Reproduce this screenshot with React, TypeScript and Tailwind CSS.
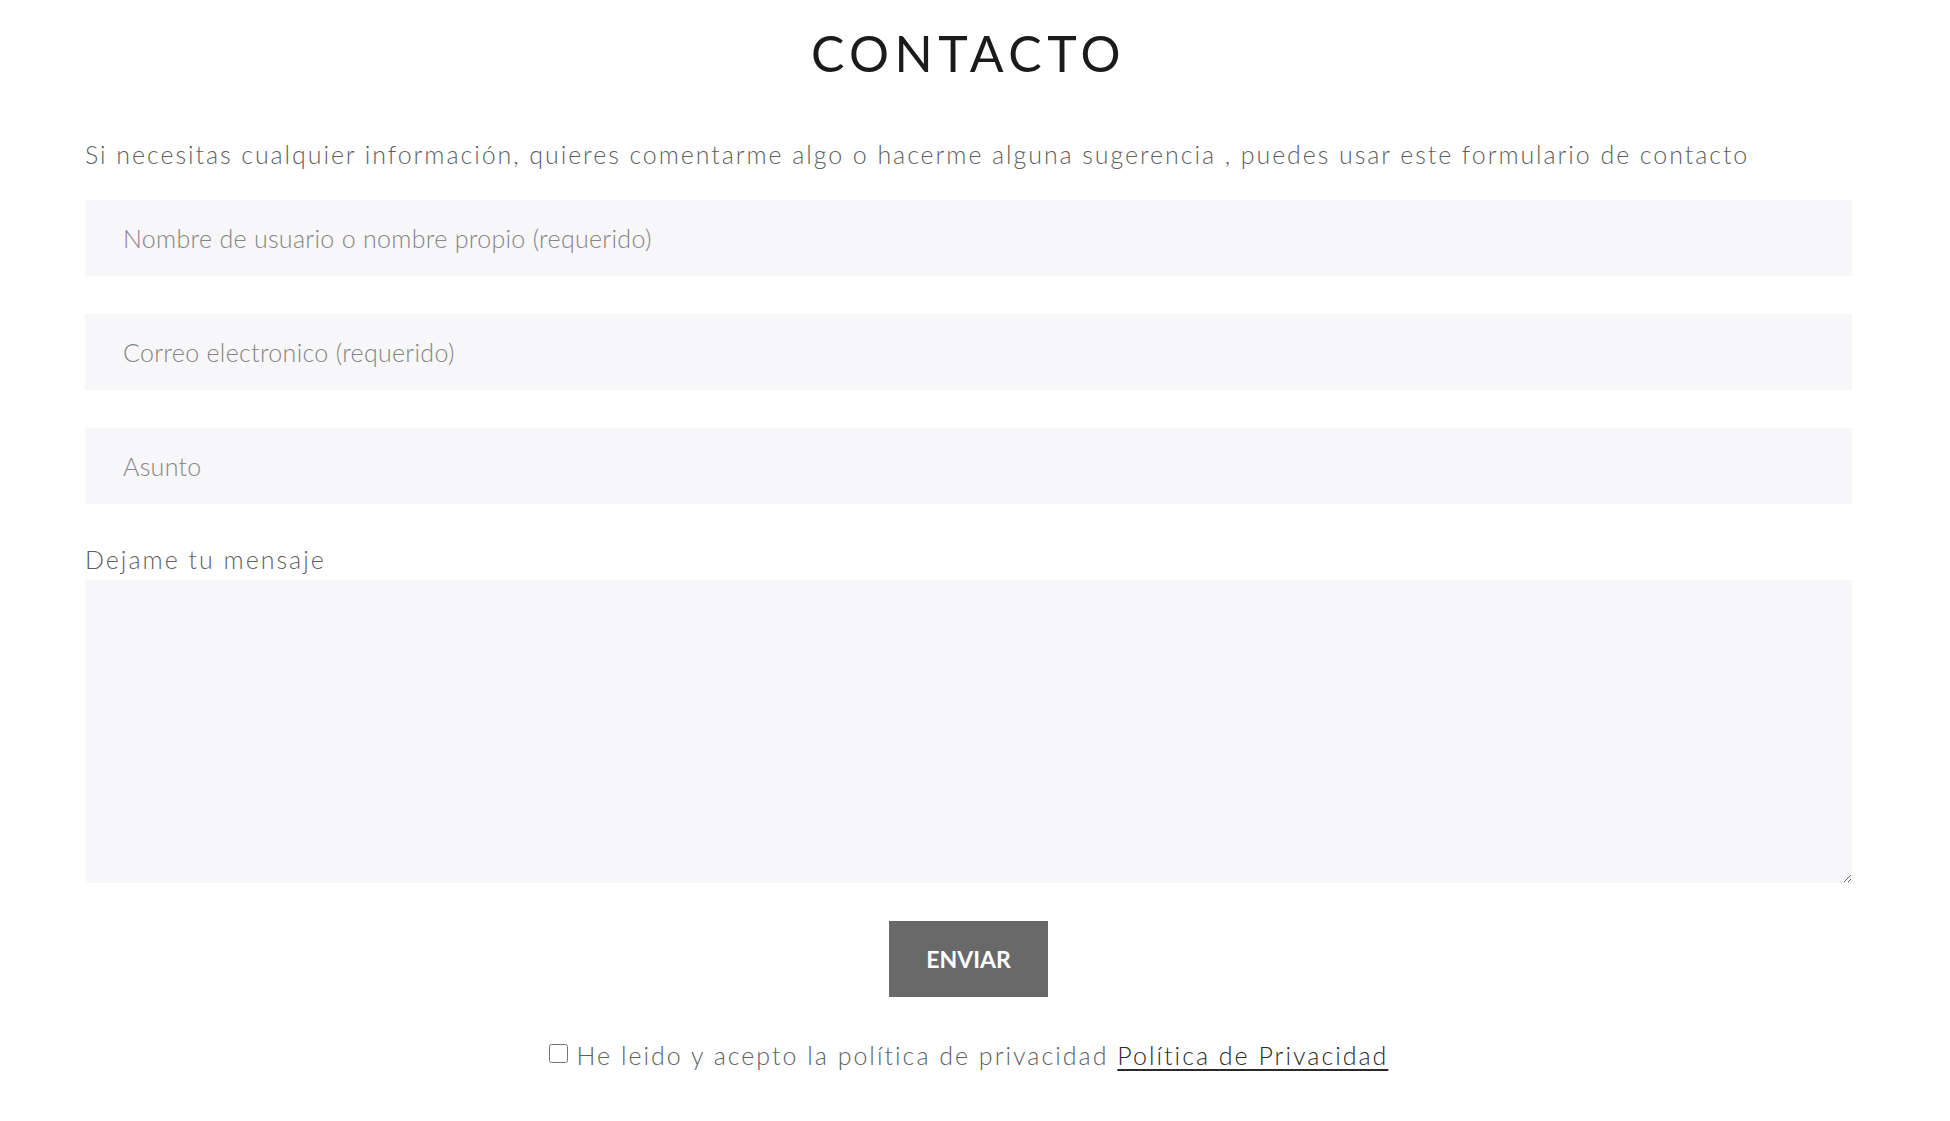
export default function App() {
  return (
    <div className="min-h-screen bg-white font-['Lato','Noto_Sans',sans-serif]">
      <div className="ml-[85px] mr-[98px] flex flex-col">
        <h1 className="mt-[22px] text-center text-[50px] leading-[62px] font-normal tracking-[0.11em] text-[#1b1b1b]">
          CONTACTO
        </h1>

        <p className="mt-[55px] text-[25px] leading-[30px] font-light tracking-[0.077em] text-[#5f5f5f]">
          Si necesitas cualquier información, quieres comentarme algo o hacerme alguna sugerencia , puedes usar este formulario de contacto
        </p>

        <form className="mt-[31px] flex flex-col" onSubmit={(e) => e.preventDefault()}>
          <input
            type="text"
            placeholder="Nombre de usuario o nombre propio (requerido)"
            className="h-[76px] w-full bg-[#f7f7f9] px-[38px] text-[25px] font-light tracking-[0.012em] text-[#333] outline-none placeholder:text-[#858585]"
          />
          <input
            type="email"
            placeholder="Correo electronico (requerido)"
            className="mt-[38px] h-[76px] w-full bg-[#f7f7f9] px-[38px] text-[25px] font-light tracking-[0.012em] text-[#333] outline-none placeholder:text-[#858585]"
          />
          <input
            type="text"
            placeholder="Asunto"
            className="mt-[38px] h-[76px] w-full bg-[#f7f7f9] px-[38px] text-[25px] font-light tracking-[0.012em] text-[#333] outline-none placeholder:text-[#858585]"
          />

          <label className="mt-[40px] text-[25px] leading-[30px] font-light tracking-[0.08em] text-[#5f5f5f]">
            Dejame tu mensaje
          </label>
          <textarea className="mt-[6px] h-[303px] w-full bg-[#f7f7f9] px-[38px] py-[20px] text-[22px] outline-none" />

          <div className="mt-[38px] flex justify-center">
            <button
              type="submit"
              className="h-[76px] w-[159px] bg-[#696969] text-[23px] font-bold text-white"
            >
              ENVIAR
            </button>
          </div>

          <div className="mt-[40px] flex items-center justify-center gap-[9px] text-[25px] font-light tracking-[0.08em] text-[#5f5f5f]">
            <input type="checkbox" className="h-[19px] w-[19px] -mt-[4px]" />
            <span>
              He leido y acepto la política de privacidad{" "}
              <a href="#" className="text-[#2a2a2a] underline underline-offset-4">
                Política de Privacidad
              </a>
            </span>
          </div>
        </form>
      </div>
    </div>
  );
}
